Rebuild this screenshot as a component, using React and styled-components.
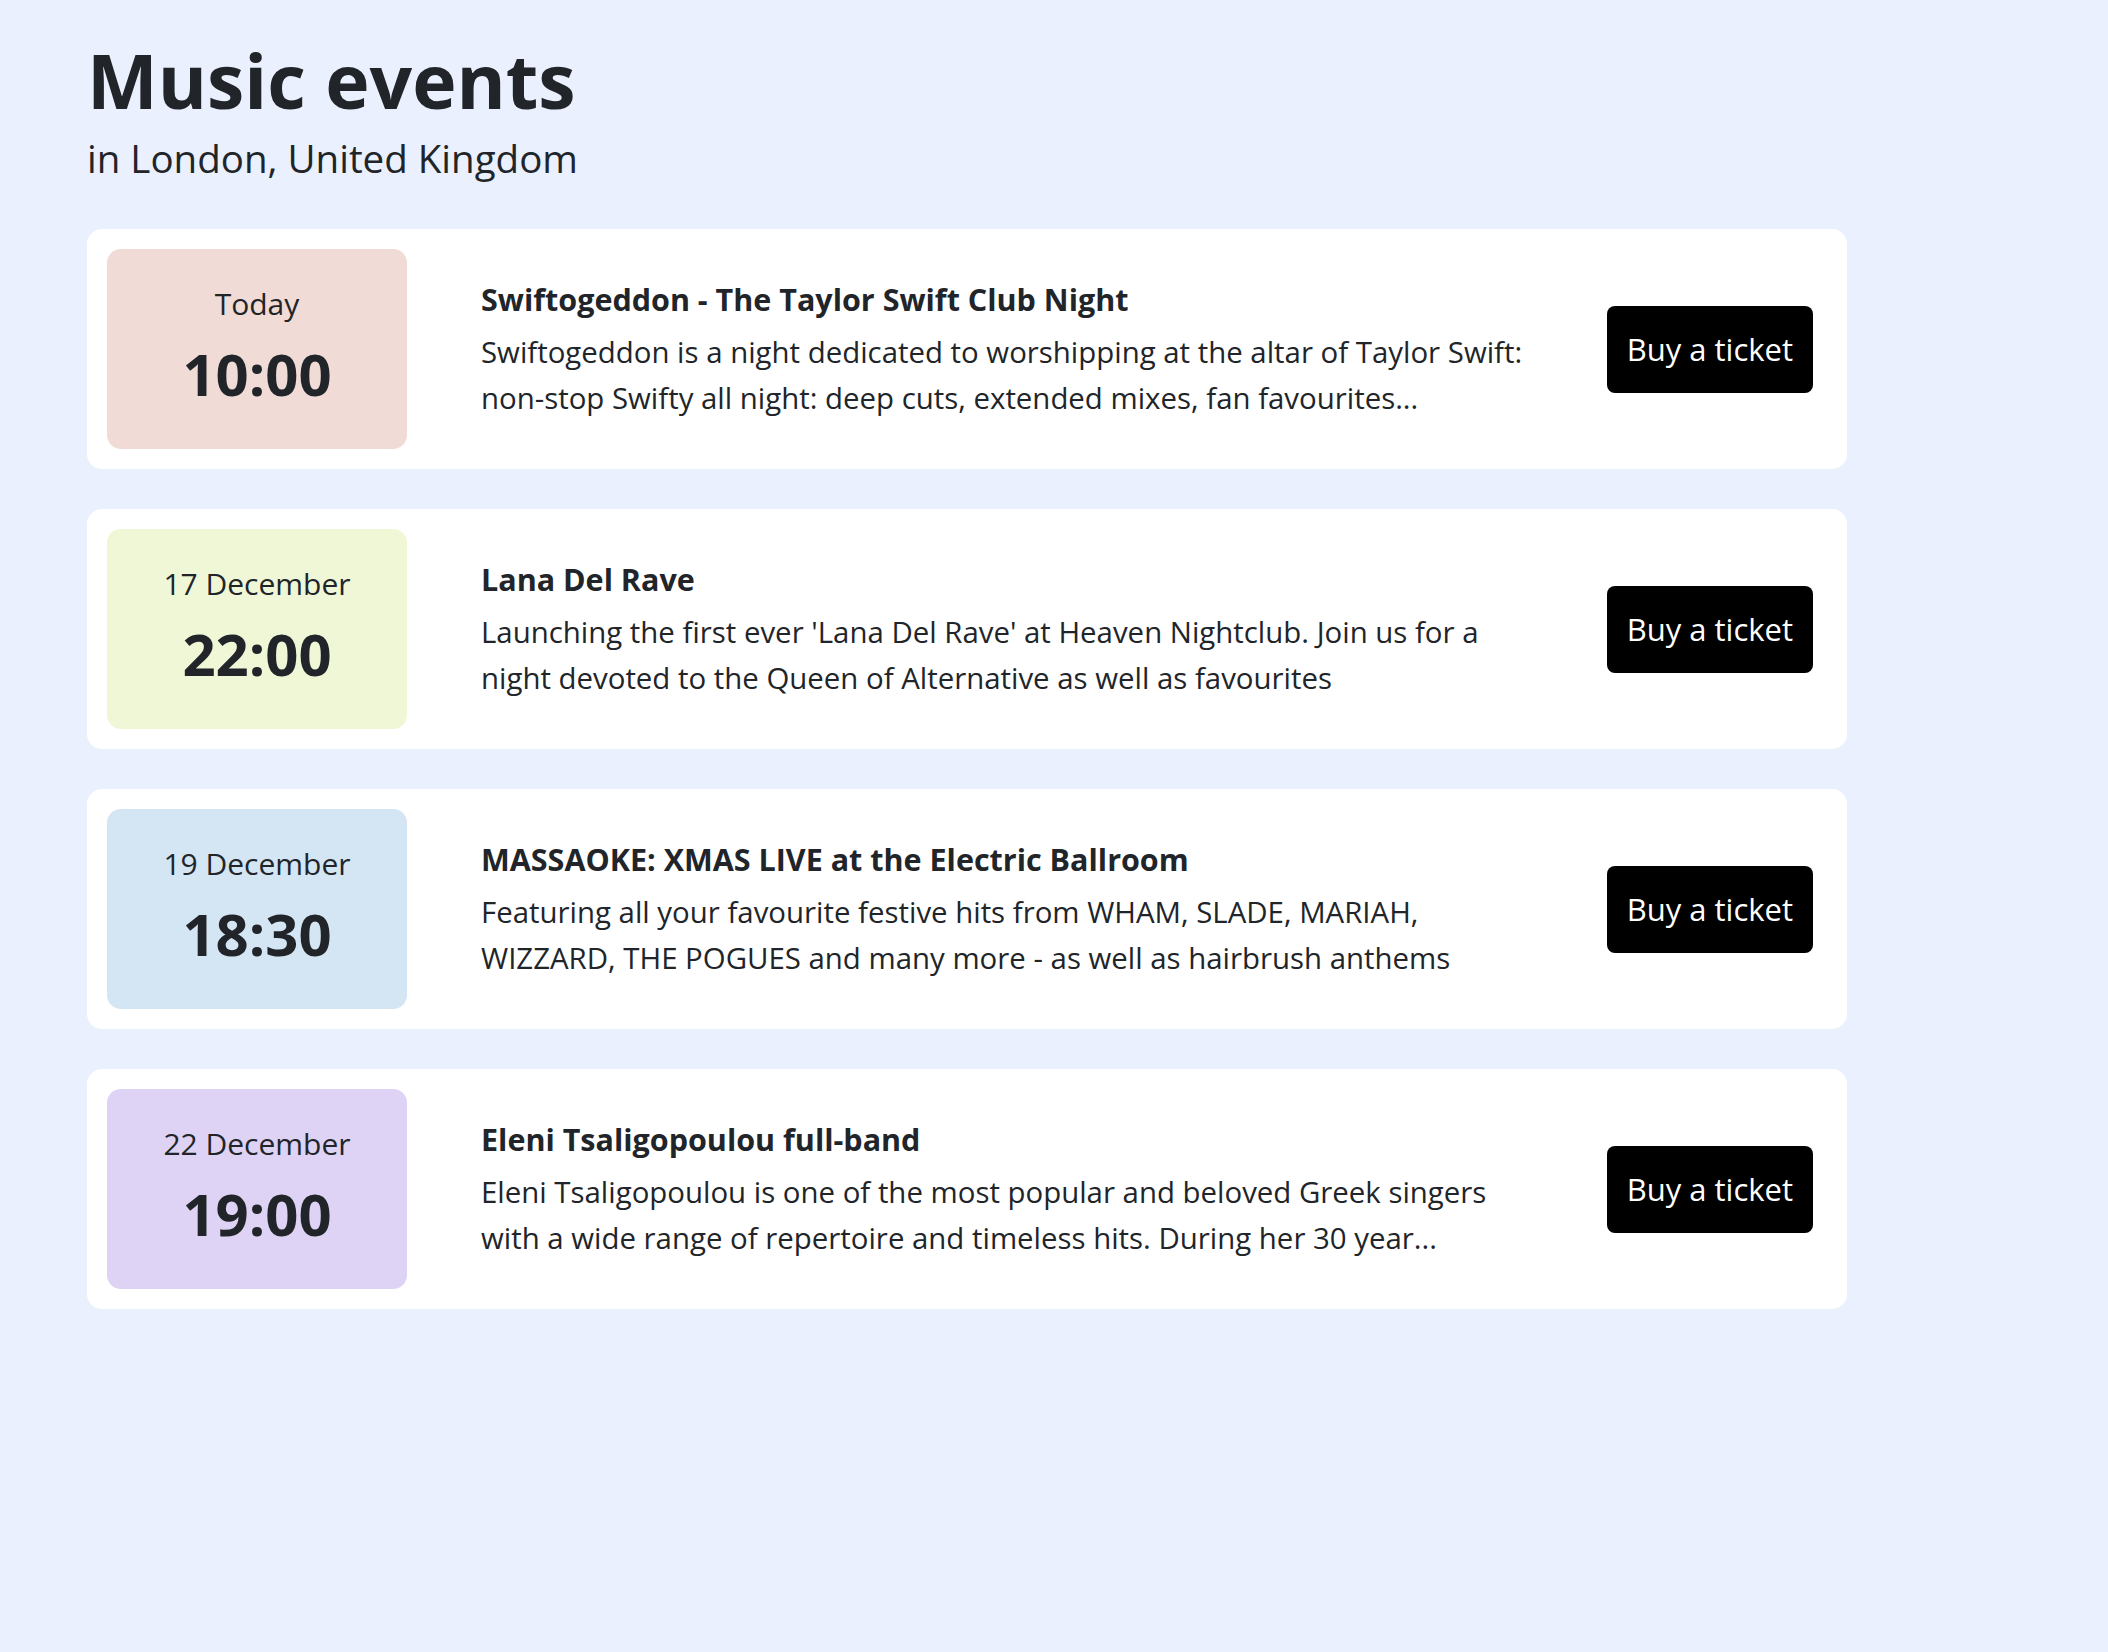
import React from "react";
import styled, { createGlobalStyle } from "styled-components";

const GlobalStyle = createGlobalStyle`
  html, body {
    margin: 0;
    padding: 0;
    background: #eaf0fd;
  }
  body {
    font-family: "Open Sans", "Noto Sans", sans-serif;
    color: #212529;
    min-height: 1652px;
  }
`;

const Page = styled.main`
  box-sizing: border-box;
  padding: 36px 87px 80px;
`;

const Title = styled.h1`
  margin: 0;
  font-size: 75px;
  font-weight: 700;
  line-height: 88.8px;
`;

const Subtitle = styled.p`
  margin: 11px 0 0;
  font-size: 38.5px;
  font-weight: 400;
  line-height: 45.6px;
`;

const List = styled.div`
  margin-top: 48px;
  max-width: 1760px;
  display: flex;
  flex-direction: column;
  gap: 40px;
`;

const Card = styled.article`
  display: flex;
  align-items: center;
  padding: 20px;
  background: #fff;
  border-radius: 15px;
`;

const DateBox = styled.div`
  flex: 0 0 300px;
  height: 200px;
  border-radius: 14px;
  background: ${(p) => p.$tint};
  display: flex;
  flex-direction: column;
  align-items: center;
  justify-content: center;
`;

const Day = styled.div`
  font-size: 30px;
  line-height: 45px;
`;

const Time = styled.div`
  margin-top: 5px;
  font-size: 58px;
  font-weight: 700;
  line-height: 86px;
`;

const Info = styled.div`
  flex: 1;
  margin: 0 69px 0 74px;
  padding-bottom: 2px;
`;

const EventName = styled.h2`
  margin: 0 0 7px;
  font-size: 30.5px;
  font-weight: 700;
  line-height: 46px;
`;

const Description = styled.p`
  margin: 0;
  font-size: 29.4px;
  line-height: 46px;
`;

const TicketButton = styled.button`
  flex: 0 0 auto;
  margin-right: 14px;
  padding: 20px 20px;
  border: 0;
  border-radius: 8px;
  background: #000;
  color: #fff;
  font-family: inherit;
  font-size: 31px;
  line-height: 47px;
  cursor: pointer;
`;

const events = [
  {
    day: "Today",
    time: "10:00",
    tint: "#f1dbd6",
    name: "Swiftogeddon - The Taylor Swift Club Night",
    text: "Swiftogeddon is a night dedicated to worshipping at the altar of Taylor Swift: non-stop Swifty all night: deep cuts, extended mixes, fan favourites...",
  },
  {
    day: "17 December",
    time: "22:00",
    tint: "#eff7d7",
    name: "Lana Del Rave",
    text: "Launching the first ever 'Lana Del Rave' at Heaven Nightclub. Join us for a night devoted to the Queen of Alternative as well as favourites",
  },
  {
    day: "19 December",
    time: "18:30",
    tint: "#d4e5f4",
    name: "MASSAOKE: XMAS LIVE at the Electric Ballroom",
    text: "Featuring all your favourite festive hits from WHAM, SLADE, MARIAH, WIZZARD, THE POGUES and many more - as well as hairbrush anthems",
  },
  {
    day: "22 December",
    time: "19:00",
    tint: "#ded3f4",
    name: "Eleni Tsaligopoulou full-band",
    text: "Eleni Tsaligopoulou is one of the most popular and beloved Greek singers with a wide range of repertoire and timeless hits. During her 30 year...",
  },
];

export default function App() {
  return (
    <>
      <GlobalStyle />
      <Page>
        <Title>Music events</Title>
        <Subtitle>in London, United Kingdom</Subtitle>
        <List>
          {events.map((e) => (
            <Card key={e.name}>
              <DateBox $tint={e.tint}>
                <Day>{e.day}</Day>
                <Time>{e.time}</Time>
              </DateBox>
              <Info>
                <EventName>{e.name}</EventName>
                <Description>{e.text}</Description>
              </Info>
              <TicketButton>Buy a ticket</TicketButton>
            </Card>
          ))}
        </List>
      </Page>
    </>
  );
}
